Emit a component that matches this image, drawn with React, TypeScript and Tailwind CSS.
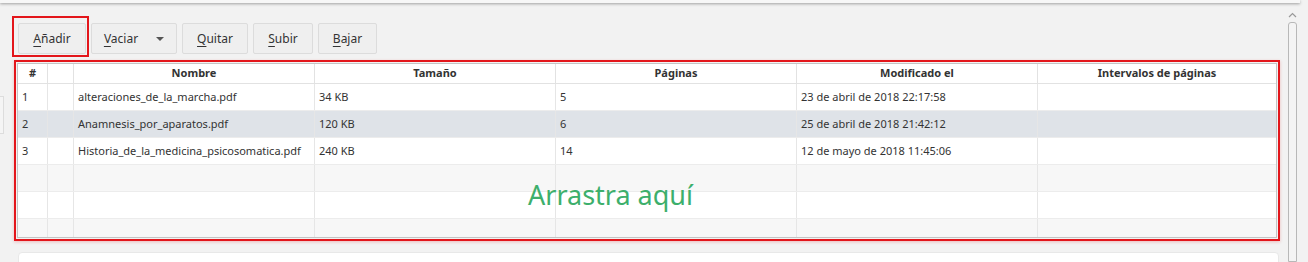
import React from 'react';

const rows = [
  { n: '1', name: 'alteraciones_de_la_marcha.pdf', size: '34 KB', pages: '5', mod: '23 de abril de 2018 22:17:58' },
  { n: '2', name: 'Anamnesis_por_aparatos.pdf', size: '120 KB', pages: '6', mod: '25 de abril de 2018 21:42:12', selected: true },
  { n: '3', name: 'Historia_de_la_medicina_psicosomatica.pdf', size: '240 KB', pages: '14', mod: '12 de mayo de 2018 11:45:06' },
  { n: '', name: '', size: '', pages: '', mod: '' },
  { n: '', name: '', size: '', pages: '', mod: '' },
  { n: '', name: '', size: '', pages: '', mod: '' },
];

const cols = ['w-[30px]', 'w-[26px]', 'w-[241px]', 'w-[241px]', 'w-[241px]', 'w-[241px]', 'flex-1'];

const ToolButton = ({ label, width, dropdown }: { label: string; width: string; dropdown?: boolean }) => (
  <button className={`${width} h-[31px] flex items-center justify-center gap-[18px] bg-[#efefef] border border-[#dcdcdc] rounded-[2px] text-[12px] text-[#333]`}>
    <span>
      <span className="underline underline-offset-[3px]">{label[0]}</span>
      {label.slice(1)}
    </span>
    {dropdown && <span className="w-0 h-0 border-l-[4px] border-r-[4px] border-t-[4px] border-l-transparent border-r-transparent border-t-[#555]" />}
  </button>
);

export default function App() {
  return (
    <div className="relative w-[1308px] h-[262px] overflow-hidden bg-[#f2f2f2] text-[#333]" style={{ fontFamily: '"Noto Sans", "Open Sans", sans-serif' }}>
      <div className="absolute left-0 top-0 w-[1300px] h-[3px] bg-[#f7f7f7] shadow-[0_1px_3px_rgba(0,0,0,0.35)]" />

      {/* left stub */}
      <div className="absolute left-0 top-[96px] w-[4px] h-[38px] border border-l-0 border-[#dddddd] bg-[#f5f5f5]" />

      {/* scrollbar */}
      <div className="absolute left-[1287px] top-[10px] w-[11px] h-[252px] flex flex-col items-center">
        <svg width="9" height="7" viewBox="0 0 9 7" className="mt-[2px]">
          <path d="M1 5 L4.5 1.5 L8 5" fill="none" stroke="#999" strokeWidth="1.2" />
        </svg>
        <div className="mt-[3px] w-[9px] flex-1 border border-[#b8b8b8] rounded-t-[3px] bg-[#f4f4f4]" />
      </div>

      <div className="flex flex-col pl-[12px] pt-[16px]">
        <div className="flex items-start gap-[2px]">
          <div className="border-2 border-[#e3161b] pt-[5px] pl-[4px] pr-[1px] pb-[1px]">
            <ToolButton label="Añadir" width="w-[68px]" />
          </div>
          <div className="mt-[7px] flex">
            <ToolButton label="Vaciar" width="w-[86px]" dropdown />
            <div className="ml-[5px] flex gap-[5px]">
              <ToolButton label="Quitar" width="w-[66px]" />
              <ToolButton label="Subir" width="w-[60px]" />
              <ToolButton label="Bajar" width="w-[59px]" />
            </div>
          </div>
        </div>

        <div className="ml-[2px] mt-[3px] w-[1266px] h-[181px] border-2 border-[#e3161b] p-[1px] shadow-[0_1px_3px_rgba(227,22,27,0.25)]">
          <div className="relative w-full h-full border border-[#c4c4c4] bg-white overflow-hidden text-[11px]">
            <div className="flex h-[20px] border-b border-[#e2e2e2] font-bold text-[#333]">
              {['#', '', 'Nombre', 'Tamaño', 'Páginas', 'Modificado el', 'Intervalos de páginas'].map((h, i) => (
                <div key={i} className={`${cols[i]} shrink-0 flex items-center justify-center border-r border-[#e2e2e2] last:border-r-0`}>{h}</div>
              ))}
            </div>
            {rows.map((r, ri) => (
              <div key={ri} className={`flex h-[27px] border-b border-[#ececec] ${r.selected ? 'bg-[#dfe3e8]' : ri % 2 === 1 ? 'bg-[#f7f7f7]' : 'bg-white'}`}>
                {[r.n, '', r.name, r.size, r.pages, r.mod, ''].map((c, ci) => (
                  <div key={ci} className={`${cols[ci]} shrink-0 flex items-center pl-[4px] border-r border-[#e6e6e6] last:border-r-0 whitespace-nowrap`}>{c}</div>
                ))}
              </div>
            ))}
            <div className="absolute left-[510px] top-[117px] text-[27px] text-[#3daf6c] leading-none">Arrastra aquí</div>
          </div>
        </div>
      </div>

      <div className="absolute left-[18px] top-[252px] w-[1261px] h-[20px] bg-white rounded-[4px] border border-[#e8e8e8]" />
    </div>
  );
}
